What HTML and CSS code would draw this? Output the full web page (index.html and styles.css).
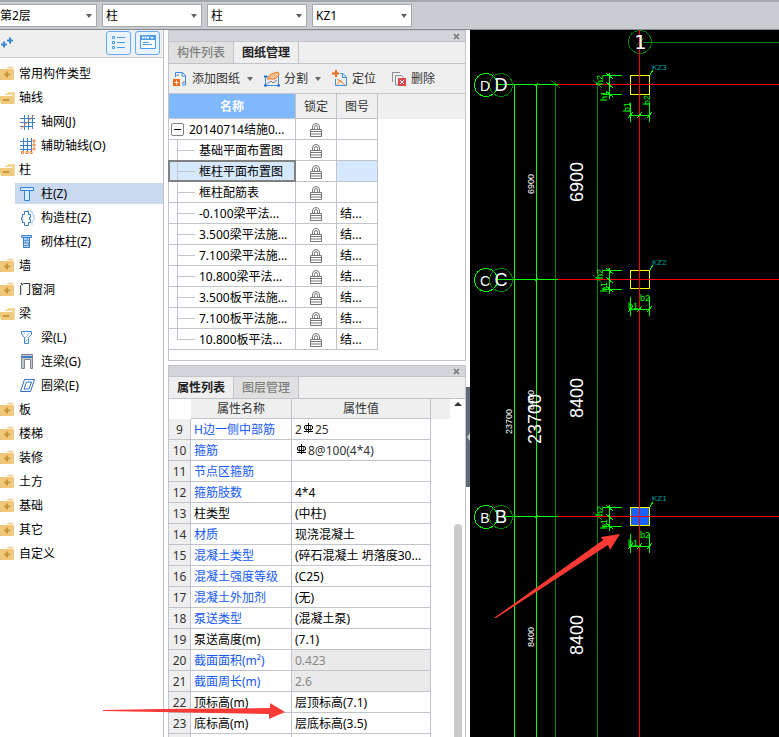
FILE: index.html
```html
<!DOCTYPE html>
<html lang="zh-CN">
<head>
<meta charset="utf-8">
<title>图纸管理</title>
<link rel="stylesheet" href="styles.css">
</head>
<body>
<svg class="defs" aria-hidden="true">
  <symbol id="folder" viewBox="0 0 16 16"><path d="M7 2.500q.5-2 2-2h3q1.500 0 1.500 1v1z" fill="#f3d596"/><path d="M0 3h12.500q1.500 0 1.500 1.500v8q0 1.500-1.500 1.500H0z" fill="#efc87c"/><path d="M4 8.500h6M7 5.500v6" stroke="#c8963c" stroke-width="2"/></symbol>
  <symbol id="folder-open" viewBox="0 0 16 16"><path d="M4 5V4h2.500l1.500-2h6q1 0 1 1V13H12V5z" fill="#f3d596"/><path d="M0 6h11.500q.5 0 1 1L14.500 14H1L0 10z" fill="#efc87c"/><path d="M3 10h6" stroke="#c8963c" stroke-width="2"/></symbol>
  <symbol id="lock" viewBox="0 0 12 14"><path d="M2.500 7V4Q2.500 .5 6 .5T9.500 4v3M4.500 7V4.500Q4.500 2.500 6 2.500T7.500 4.500V7" fill="none" stroke="#777"/><path d="M.5 6.500h11v7H.5zM1 8.500h10M1 11h10" fill="#fff" stroke="#777"/></symbol>
  <symbol id="rebar" viewBox="0 0 11 11"><path d="M5.500 0v10M1 8.500h9" stroke="#000"/><rect x="1.500" y="2.500" width="8" height="4" rx="1.500" fill="none" stroke="#000"/><path d="M3.500 2v6M7.500 2v6" stroke="#000" stroke-opacity=".6"/></symbol>
  <symbol id="close" viewBox="0 0 7 7"><path d="M1 1l5 5M6 1L1 6" stroke="#777" stroke-width="1.600"/></symbol>
</svg>

<header class="topbar">
  <label class="picker"><select aria-label="楼层"><option>第2层</option></select></label>
  <label class="picker"><select aria-label="构件分类"><option>柱</option></select></label>
  <label class="picker"><select aria-label="构件类型"><option>柱</option></select></label>
  <label class="picker"><select aria-label="构件"><option>KZ1</option></select></label>
</header>

<main class="workspace">
  <nav class="nav">
    <div class="nav-tools">
      <svg class="plus" width="14" height="14"><path d="M1 8.500h6M4 5.500v6M7 4.500h6M10 1.500v6" stroke="#3c86d8" stroke-width="2"/></svg>
      <button class="tool-toggle" aria-label="列表视图"><svg width="15" height="15" fill="none" stroke="#4a9bea"><path d="M1.500 1.500h2v2h-2zM1.500 6.500h2v2h-2zM1.500 11.500h2v2h-2zM6 2.500h8M6 7.500h8M6 12.500h8"/></svg></button>
      <button class="tool-toggle" aria-label="窗口视图"><svg width="16" height="15"><path d="M.5.500h15v13H.5z" fill="#fff" stroke="#4a9bea"/><path d="M1 1h14v4H1z" fill="#4a9bea"/><path d="M2 2.500h7" stroke="#fff" stroke-width="2" stroke-dasharray="2 .5"/><path d="M10 2h4l-2 2z" fill="#fff"/><path d="M3 7.500h6M3 9.500h9" stroke="#4a9bea"/></svg></button>
    </div>
    <ul class="tree">
      <li><svg><use href="#folder"/></svg>常用构件类型</li>
      <li><svg><use href="#folder-open"/></svg>轴线</li>
      <li class="leaf"><svg><path d="M0 4.500h15M0 8.500h15M0 12.500h13M4.500 1v15M8.500 1v15M12.500 1v14" stroke="#3c7fcf"/><path d="M1 15L14 1" stroke="#ee8030"/></svg>轴网(J)</li>
      <li class="leaf"><svg><path d="M0 3.500h12M0 7.500h12M0 11.500h12M3.500 0v13M7.500 0v13M11.500 0v13" stroke="#3c7fcf"/><path d="M13 2h2v2h-2zM13 6h2v2h-2zM13 10h2v2h-2zM1.500 13.500h2v2h-2zM6 13.500h2v2H6zM10 13.500h2v2h-2z" stroke="#ee8030" fill="#fff"/></svg>辅助轴线(O)</li>
      <li><svg><use href="#folder-open"/></svg>柱</li>
      <li class="leaf selected"><svg><path d="M.5 1.500h13v3H.5zM4.500 4.500h5v10h-5z" fill="#dcebfb" stroke="#3283df"/></svg>柱(Z)</li>
      <li class="leaf"><svg><path d="M7 1h5v3l2 1v5l-2 2v3" fill="none" stroke="#9cc4ef"/><path d="M4.500 1.500h4v3h2v3h-1v2h1v3h-2v3h-4v-3h-2v-3h-1v-2h1v-3h2z" fill="#fff" stroke="#2f79cf"/></svg>构造柱(Z)</li>
      <li class="leaf"><svg><path d="M1.500 1.500h10v2h-10zM3.500 3.500h6v10h-6z" fill="#b7d6f5" stroke="#3c7fcf"/><path d="M4 6.500h6M4 9h6M4 11.500h6M7 4v2M5.500 7v2M8.500 9v2" stroke="#3c7fcf" stroke-opacity=".7"/></svg>砌体柱(Z)</li>
      <li><svg><use href="#folder"/></svg>墙</li>
      <li><svg><use href="#folder"/></svg>门窗洞</li>
      <li><svg><use href="#folder-open"/></svg>梁</li>
      <li class="leaf"><svg><path d="M1.500 1.500h10v3L8.500 7.500v6h-4v-6L1.500 4.500z" fill="#fff" stroke="#3c86d8"/><path d="M3 5l2-2M5 8l5-5M5 12l4-4" stroke="#8bbdf0"/></svg>梁(L)</li>
      <li class="leaf"><svg><path d="M1.500.500h11v14h-2V5.500h-6v9h-3z" fill="#c2c8cc" stroke="#7d868d"/><path d="M2 2h10v2H2z" fill="#3c7fcf"/></svg>连梁(G)</li>
      <li class="leaf"><svg><path d="M4.500 1.500h10l-4 12H.5zM6.500 4h5l-2.500 7H4z" fill="none" stroke="#2f70c4"/></svg>圈梁(E)</li>
      <li><svg><use href="#folder"/></svg>板</li>
      <li><svg><use href="#folder"/></svg>楼梯</li>
      <li><svg><use href="#folder"/></svg>装修</li>
      <li><svg><use href="#folder"/></svg>土方</li>
      <li><svg><use href="#folder"/></svg>基础</li>
      <li><svg><use href="#folder"/></svg>其它</li>
      <li><svg><use href="#folder"/></svg>自定义</li>
    </ul>
  </nav>

  <div class="panels">
    <section class="panel drawings">
      <div class="titlebar"><button aria-label="关闭"><svg width="7" height="7"><use href="#close"/></svg></button></div>
      <div class="tabs"><button>构件列表</button><button class="active">图纸管理</button></div>
      <div class="toolbar">
        <button><svg width="15" height="16" fill="none"><path d="M2.500 6V1.500h7l3 3V14H9" stroke="#3f8ede"/><path d="M9 1v4h4" stroke="#3f8ede"/><path d="M4 5V4h2M11 10v2H9" stroke="#778"/><path d="M0 8h7v7H0z" fill="#ee6a1c"/><path d="M1.500 11.500h4M3.500 9.500v4" stroke="#fff"/></svg><span>添加图纸</span><i class="caret"></i></button>
        <button><svg width="16" height="16" fill="none"><path d="M1.500 5.500h13v9h-13z" stroke="#3f8ede"/><path d="M0 5.500h3M0 14.500h3M13 14.500h3" stroke="#256fc0" stroke-width="2"/><path d="M3 8l4-5 7-2 1 3-4 4z" fill="#f7c08d" stroke="#ee7a28"/><path d="M3 13l4-3 2 2 4-3" stroke="#778"/></svg><span>分割</span><i class="caret"></i></button>
        <button class="plain"><svg width="16" height="17" fill="none"><path d="M8 3.500h3l3.500 4v8h-11V9" stroke="#3f8ede"/><path d="M10.500 3.500v4h4" stroke="#3f8ede"/><path d="M4 0v7M0 3.500h7" stroke="#ee6a1c" stroke-width="2"/><path d="M5 15l3-5 5 5M5 9l7 5" stroke="#ee8a48"/></svg><span>定位</span></button>
        <button class="plain"><svg width="16" height="16" fill="none"><path d="M1.500 11V1.500H9M4.500 4.500h6l2 2V14h-8z" stroke="#8a8f93"/><path d="M7 7h8v8H7z" fill="#d9484d"/><path d="M9 9l4 4M13 9l-4 4" stroke="#fff"/></svg><span>删除</span></button>
      </div>
      <table class="grid sheet-table">
        <colgroup><col class="c-name"><col class="c-lock"><col class="c-no"><col></colgroup>
        <thead><tr><th class="sorted">名称</th><th>锁定</th><th>图号</th><th class="rest"></th></tr></thead>
        <tbody>
          <tr><td><div class="node root"><button class="expander" aria-label="折叠"></button><span>20140714结施0...</span></div></td><td class="lock"><svg><use href="#lock"/></svg></td><td></td></tr>
          <tr><td><div class="node"><i></i><span>基础平面布置图</span></div></td><td class="lock"><svg><use href="#lock"/></svg></td><td></td></tr>
          <tr class="current"><td><div class="node"><i></i><span>框柱平面布置图</span></div></td><td class="lock"><svg><use href="#lock"/></svg></td><td></td></tr>
          <tr><td><div class="node"><i></i><span>框柱配筋表</span></div></td><td class="lock"><svg><use href="#lock"/></svg></td><td></td></tr>
          <tr><td><div class="node"><i></i><span>-0.100梁平法...</span></div></td><td class="lock"><svg><use href="#lock"/></svg></td><td>结...</td></tr>
          <tr><td><div class="node"><i></i><span>3.500梁平法施...</span></div></td><td class="lock"><svg><use href="#lock"/></svg></td><td>结...</td></tr>
          <tr><td><div class="node"><i></i><span>7.100梁平法施...</span></div></td><td class="lock"><svg><use href="#lock"/></svg></td><td>结...</td></tr>
          <tr><td><div class="node"><i></i><span>10.800梁平法...</span></div></td><td class="lock"><svg><use href="#lock"/></svg></td><td>结...</td></tr>
          <tr><td><div class="node"><i></i><span>3.500板平法施...</span></div></td><td class="lock"><svg><use href="#lock"/></svg></td><td>结...</td></tr>
          <tr><td><div class="node"><i></i><span>7.100板平法施...</span></div></td><td class="lock"><svg><use href="#lock"/></svg></td><td>结...</td></tr>
          <tr><td><div class="node last"><i></i><span>10.800板平法...</span></div></td><td class="lock"><svg><use href="#lock"/></svg></td><td>结...</td></tr>
        </tbody>
      </table>
    </section>

    <section class="panel props">
      <div class="titlebar"><button aria-label="关闭"><svg width="7" height="7"><use href="#close"/></svg></button></div>
      <div class="tabs"><button class="active">属性列表</button><button>图层管理</button></div>
      <div class="scroll-area">
        <table class="grid prop-table">
          <colgroup><col class="c-idx"><col class="c-prop"><col class="c-val"><col></colgroup>
          <thead><tr><th class="corner"></th><th>属性名称</th><th>属性值</th><th class="rest"></th></tr></thead>
          <tbody>
            <tr><th>9</th><td class="key">H边一侧中部筋</td><td class="soft">2<svg><use href="#rebar"/></svg>25</td></tr>
            <tr><th>10</th><td class="key">箍筋</td><td class="soft"><svg><use href="#rebar"/></svg>8@100(4*4)</td></tr>
            <tr><th>11</th><td class="key">节点区箍筋</td><td></td></tr>
            <tr><th>12</th><td class="key">箍筋肢数</td><td>4*4</td></tr>
            <tr><th>13</th><td>柱类型</td><td>(中柱)</td></tr>
            <tr><th>14</th><td class="key">材质</td><td>现浇混凝土</td></tr>
            <tr><th>15</th><td class="key">混凝土类型</td><td>(碎石混凝土 坍落度30...</td></tr>
            <tr><th>16</th><td class="key">混凝土强度等级</td><td>(C25)</td></tr>
            <tr><th>17</th><td class="key">混凝土外加剂</td><td>(无)</td></tr>
            <tr><th>18</th><td class="key">泵送类型</td><td>(混凝土泵)</td></tr>
            <tr><th>19</th><td>泵送高度(m)</td><td>(7.1)</td></tr>
            <tr><th>20</th><td class="key">截面面积(m²)</td><td class="readonly">0.423</td></tr>
            <tr><th>21</th><td class="key">截面周长(m)</td><td class="readonly">2.6</td></tr>
            <tr><th>22</th><td>顶标高(m)</td><td>层顶标高(7.1)</td></tr>
            <tr><th>23</th><td>底标高(m)</td><td>层底标高(3.5)</td></tr>
            <tr><th></th><td></td><td></td></tr>
          </tbody>
        </table>
        <div class="scrollbar"><i class="up"></i><i class="thumb"></i></div>
      </div>
    </section>
  </div>

  <div class="splitter"><button aria-label="收起面板"></button></div>

  <div class="cad">
    <svg>
      <defs>
        <g id="dims-left"><path d="M139.500-12v26M133-9.500h19M133 9.500h19M136-12l7 6M136-3l7 6M136 6l7 6"/></g>
        <g id="dims-below"><path d="M160.500 19v19M179.500 19v19M160 31.500h20M158 34l5-6M167 34l5-6M177 34l5-6"/></g>
        <g id="axis">
          <path class="lime" d="M28 .5h60"/><path class="lime" d="M65 2l3-3"/>
          <circle class="lime" cx="16" cy="1" r="11.500"/><circle class="green" cx="31" cy="1" r="11.500"/>
        </g>
      </defs>
      <path class="lime" d="M44.500 54V3000M66.500 54V3000"/>
      <path class="green" d="M85.500 54V3000M127.500 54V3000M81 50l9 8M123 50l9 8M123 245l9 8M123 482l9 8M173 12.500H3000M166 16l8-8"/>
      <circle class="green" cx="170" cy="12" r="11.500"/>

      <rect class="column active" x="160.500" y="477.500" width="19" height="18"/>
      <rect class="column" x="160.500" y="45.500" width="19" height="19"/>
      <rect class="column" x="160.500" y="240.500" width="19" height="18"/>
      <path class="red" d="M169.500 0V3000M88 54.500H3000M88 249.500H3000M88 486.500H3000"/>

      <use href="#axis" y="54"/><use href="#axis" y="249"/><use href="#axis" y="486"/>
      <g class="lime">
        <use href="#dims-left" y="55"/><use href="#dims-left" y="250"/><use href="#dims-left" y="487"/>
        <use href="#dims-below" y="54"/><use href="#dims-below" y="248"/><use href="#dims-below" y="485"/>
        <path d="M180 45l3-5M180 240l3-5M180 477l3-5"/>
      </g>

      <g class="axis-name">
        <text class="mono" x="170" y="19">1</text>
        <text class="minor" x="15" y="61">D</text><text x="31" y="61">D</text>
        <text class="minor" x="15" y="256">C</text><text x="31" y="256">C</text>
        <text class="minor" x="15" y="493">B</text><text x="31" y="493">B</text>
      </g>
      <g class="tag">
        <text x="182" y="40">KZ3</text><text x="182" y="235">KZ2</text><text x="182" y="471">KZ1</text>
      </g>
      <g class="dim-name">
        <text transform="translate(133 55) rotate(-90)">h2</text><text transform="translate(137 71) rotate(-90)">h1</text>
        <text transform="translate(160 82) rotate(-90)">b1</text><text transform="translate(180 75) rotate(-90)">b2</text>
        <text transform="translate(133 249) rotate(-90)">h2</text><text transform="translate(137 262) rotate(-90)">h1</text>
        <text x="158" y="279">b1</text><text x="170" y="271">b2</text>
        <text transform="translate(133 486) rotate(-90)">h2</text><text transform="translate(137 499) rotate(-90)">h1</text>
        <text x="158" y="516">b1</text><text x="170" y="508">b2</text>
      </g>
      <g class="dim">
        <text transform="translate(113 172) rotate(-90)">6900</text>
        <text transform="translate(113 388) rotate(-90)">8400</text>
        <text transform="translate(113 625) rotate(-90)">8400</text>
        <text transform="translate(71 414) rotate(-90)">23700</text>
      </g>
      <g class="dim-minor">
        <text transform="translate(64 164) rotate(-90)">6900</text>
        <text transform="translate(64 380) rotate(-90)">8400</text>
        <text transform="translate(64 617) rotate(-90)">8400</text>
        <text transform="translate(42 404) rotate(-90)">23700</text>
      </g>
    </svg>
  </div>

  <svg class="callouts" aria-hidden="true">
    <path d="M103 680l57-1 110-1v-5l15 9-16 7v-5l-109-2-57-1z"/>
    <path d="M494 588L603 510l-2-3 19-3-10 16-2-5-112 73z"/>
  </svg>
</main>
</body>
</html>
```
FILE: styles.css
```css
* { box-sizing: border-box; }

body {
  margin: 0;
  height: 100vh;
  display: flex;
  flex-direction: column;
  overflow: hidden;
  background: #fff;
  color: #000;
  font: 12px/20px "Noto Sans", "Noto Sans CJK SC", sans-serif;
}

button, select { font: inherit; color: inherit; margin: 0; padding: 0; border: 0; background: none; }
svg { display: block; flex: none; }
.defs { position: absolute; width: 0; height: 0; }

/* Top selectors */
.topbar {
  flex: none;
  display: flex;
  gap: 5px;
  height: 30px;
  padding-top: 2px;
  background: #c9cdd2;
  border-top: 2px solid #a3a9af;
  border-bottom: 1px solid #858b91;
}
.picker { position: relative; width: 100px; height: 23px; }
.picker:first-child { width: 97px; }
.picker select {
  appearance: none;
  width: 100%;
  height: 100%;
  padding-left: 3px;
  background: #fff;
  border: 1px solid #a5a7aa;
  border-radius: 0;
}
.picker:first-child select { padding-left: 0; border-left: 0; }
.picker::after {
  content: "";
  position: absolute;
  right: 5px;
  top: 10px;
  border: 3px solid transparent;
  border-top: 4px solid #606060;
  border-bottom: 0;
}

.workspace { position: relative; flex: 1; min-height: 0; display: flex; }

/* Component tree */
.nav { flex: none; width: 164px; border-right: 1px solid #bfc1c6; }
.nav-tools {
  display: flex;
  align-items: center;
  gap: 4px;
  height: 28px;
  padding: 0 3px 2px 0;
  background: #efefef;
  border-bottom: 1px solid #ccced2;
}
.plus { margin-right: auto; }
.tool-toggle {
  display: grid;
  place-items: center;
  width: 25px;
  height: 24px;
  background: #e9f3fe;
  border: 1px solid #66aaf2;
  border-radius: 3px;
}
.tree { list-style: none; margin: 0; padding: 5px 0 0; }
.tree li { display: flex; align-items: center; gap: 3px; height: 21px; margin-bottom: 3px; }
.tree svg { width: 16px; height: 16px; }
.tree .leaf { margin-left: 15px; padding-left: 5px; gap: 5px; }
.tree .selected { background: #c9d9ef; }

/* Panels */
.panels { flex: none; width: 298px; margin-left: 4px; display: flex; flex-direction: column; gap: 4px; }
.panel { border: 1px solid #c1c4ca; background: #fff; }
.drawings { flex: none; height: 331px; }
.props { flex: 1; min-height: 0; display: flex; flex-direction: column; border-bottom: 0; }
.titlebar {
  flex: none;
  display: flex;
  align-items: center;
  justify-content: flex-end;
  height: 11px;
  padding-right: 5px;
  background: #d3d5da;
  border-bottom: 1px solid #c1c4ca;
}
.tabs { flex: none; display: flex; height: 22px; background: #efefef; border-bottom: 1px solid #c1c4ca; }
.tabs button { width: 65px; background: #e0e0e0; color: #808080; border-right: 1px solid #c1c4ca; font-weight: 500; }
.tabs .active { background: #efefef; color: #222; font-weight: bold; }
.toolbar {
  display: flex;
  align-items: center;
  gap: 11px;
  height: 30px;
  padding-left: 4px;
  background: #efefef;
  border-bottom: 1px solid #c1c4ca;
  color: #333;
}
.toolbar button { display: flex; align-items: center; gap: 4px; white-space: nowrap; }
.toolbar .plain { padding-right: 4px; }
.caret { margin-left: 3px; border: 3px solid transparent; border-top: 4px solid #666; border-bottom: 0; }

/* Tables */
.grid { width: 100%; table-layout: fixed; border-collapse: separate; border-spacing: 0; }
.grid th, .grid td {
  height: 21px;
  padding: 1px 0 0 3px;
  border-right: 1px solid #c1c4ca;
  border-bottom: 1px solid #c1c4ca;
  line-height: 19px;
  font-weight: normal;
  text-align: left;
  white-space: nowrap;
}
.grid th { padding: 1px 0 0; background: #efefef; color: #333; text-align: center; }
.grid thead .rest { border-right: 0; border-bottom-color: #efefef; }

.c-name { width: 127px; }
.c-lock, .c-no { width: 41px; }
.sheet-table thead th { height: 25px; }
.sheet-table .sorted { background: #80b9fb; color: #fff; font-weight: bold; }
.sheet-table .lock { padding: 1px 0 0; }
.lock svg { width: 12px; height: 14px; margin: 0 auto; }
.sheet-table td:first-child { padding: 0; }
.node { display: flex; align-items: center; gap: 4px; height: 20px; padding-left: 8px; }
.node span { padding-top: 1px; }
.node.root { padding-left: 2px; gap: 5px; }
.node i {
  align-self: stretch;
  width: 18px;
  border-left: 1px solid #c1c4ca;
  background: linear-gradient(#c1c4ca, #c1c4ca) 0 50% / 100% 1px no-repeat;
}
.node.last i { height: 11px; background-position: 0 100%; align-self: flex-start; }
.expander {
  display: grid;
  place-items: center;
  width: 13px;
  height: 13px;
  border: 1px solid #808080;
  border-radius: 2px;
}
.expander::before { content: ""; width: 7px; height: 1px; background: #000; }
.current td { background: #d5e8fe; }
.current .lock { background: #fff; }
.current .node { outline: 2px solid #808080; outline-offset: -1px; }

.scroll-area { flex: 1; min-height: 0; display: flex; align-items: flex-start; overflow: hidden; }
.prop-table { flex: 1; width: auto; min-width: 0; }
.c-idx { width: 22px; }
.c-prop { width: 101px; }
.c-val { width: 139px; }
.prop-table thead th { height: 20px; line-height: 18px; }
.prop-table thead .corner { background: #fff; border-color: #fff; }
.prop-table .key { color: #1559f5; }
.prop-table .soft { color: #333; }
.prop-table .readonly { background: #eaeaea; color: #888; }
.prop-table td svg { display: inline-block; width: 11px; height: 11px; margin: 0 1px; vertical-align: 0; }
.scrollbar { align-self: stretch; width: 15px; display: flex; flex-direction: column; align-items: center; background: #fff; }
.up { margin-top: 3px; border: 4px solid transparent; border-bottom: 4px solid #333; border-top: 0; }
.thumb { flex: 1; width: 8px; margin-top: 118px; background: #cbcbcb; border-radius: 4px 4px 0 0; }

.splitter { flex: none; width: 4px; padding-top: 357px; background: #fff; }
.splitter button { display: grid; place-items: center; width: 4px; height: 100px; background: #5f6b76; }
.splitter button::before { content: ""; border: 4px solid transparent; border-right: 3px solid #c5cbd1; border-left: 0; }

/* Drawing area */
.cad { flex: 1; min-width: 0; background: #000; overflow: hidden; }
.cad > svg { width: 100%; height: 100%; shape-rendering: crispEdges; fill: none; }
.lime { stroke: #0f0; }
.green { stroke: #008000; }
.red { stroke: #f00; }
.column { stroke: #ff0; }
.column.active { fill: #1a62ff; }
.cad text { font-family: "Liberation Sans", sans-serif; stroke: none; }
.axis-name { fill: #fff; font-size: 18px; text-anchor: middle; }
.cad .axis-name .mono { font-family: "DejaVu Sans Mono", monospace; font-size: 20px; }
.cad .axis-name .minor { font-family: "Liberation Sans Narrow", "Liberation Sans", sans-serif; font-size: 14px; }
.dim { fill: #fff; font-size: 18px; }
.cad .dim-minor text, .cad .tag text, .cad .dim-name text { font-family: "Liberation Sans Narrow", "Liberation Sans", sans-serif; font-size: 9px; }
.cad .tag text { font-size: 8px; }
.dim-minor { fill: #fff; }
.tag { fill: #00a0a0; }
.dim-name { fill: #0f0; }

.callouts { position: absolute; inset: 0; width: 100%; height: 100%; fill: #fb3a36; pointer-events: none; }
```
